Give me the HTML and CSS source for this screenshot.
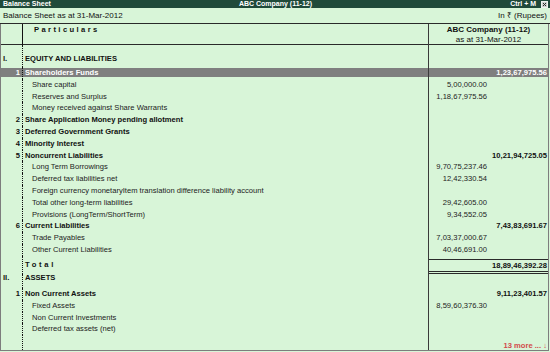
FILE: index.html
```html
<!DOCTYPE html>
<html lang="en">
<head>
    <meta charset="UTF-8">
    <meta name="viewport" content="width=device-width, initial-scale=1.0">
    <title>Balance Sheet</title>
    <link rel="stylesheet" href="styles.css">
</head>
<body>
    <div class="titlebar">
        <span class="tb-left">Balance Sheet</span>
        <span class="tb-center">ABC Company (11-12)</span>
        <span class="tb-right">Ctrl + M
            <svg class="close-box" width="7" height="7" viewBox="0 0 7 7">
                <rect x="0.5" y="0.5" width="6" height="6" fill="#cfd3cf" stroke="#eef2ee"/>
                <path d="M2 2l3 3M5 2l-3 3" stroke="#2a2a2a" stroke-width="1"/>
            </svg>
        </span>
    </div>
    <div class="subhead">
        <span>Balance Sheet as at 31-Mar-2012</span>
        <span>In ₹ (Rupees)</span>
    </div>

    <div class="sheet">
        <div class="row head">
            <div class="c1"></div>
            <div class="c2"><span class="particulars">Particulars</span></div>
            <div class="c34">
                <b>ABC Company (11-12)</b>
                <span>as at 31-Mar-2012</span>
            </div>
        </div>

        <div class="row section first">
            <div class="c1 roman">I.</div>
            <div class="c2 label">EQUITY AND LIABILITIES</div>
            <div class="c3"></div><div class="c4"></div>
        </div>
        <div class="row group selected">
            <div class="c1 num">1</div><div class="c2 label">Shareholders Funds</div>
            <div class="c3"></div><div class="c4">1,23,67,975.56</div>
        </div>
        <div class="row item">
            <div class="c1"></div><div class="c2">Share capital</div>
            <div class="c3">5,00,000.00</div><div class="c4"></div>
        </div>
        <div class="row item">
            <div class="c1"></div><div class="c2">Reserves and Surplus</div>
            <div class="c3">1,18,67,975.56</div><div class="c4"></div>
        </div>
        <div class="row item">
            <div class="c1"></div><div class="c2">Money received against Share Warrants</div>
            <div class="c3"></div><div class="c4"></div>
        </div>
        <div class="row group">
            <div class="c1 num">2</div><div class="c2 label">Share Application Money pending allotment</div>
            <div class="c3"></div><div class="c4"></div>
        </div>
        <div class="row group">
            <div class="c1 num">3</div><div class="c2 label">Deferred Government Grants</div>
            <div class="c3"></div><div class="c4"></div>
        </div>
        <div class="row group">
            <div class="c1 num">4</div><div class="c2 label">Minority Interest</div>
            <div class="c3"></div><div class="c4"></div>
        </div>
        <div class="row group">
            <div class="c1 num">5</div><div class="c2 label">Noncurrent Liabilities</div>
            <div class="c3"></div><div class="c4">10,21,94,725.05</div>
        </div>
        <div class="row item">
            <div class="c1"></div><div class="c2">Long Term Borrowings</div>
            <div class="c3">9,70,75,237.46</div><div class="c4"></div>
        </div>
        <div class="row item">
            <div class="c1"></div><div class="c2">Deferred tax liabilities net</div>
            <div class="c3">12,42,330.54</div><div class="c4"></div>
        </div>
        <div class="row item">
            <div class="c1"></div><div class="c2">Foreign currency monetaryItem translation difference liability account</div>
            <div class="c3"></div><div class="c4"></div>
        </div>
        <div class="row item">
            <div class="c1"></div><div class="c2">Total other long-term liabilities</div>
            <div class="c3">29,42,605.00</div><div class="c4"></div>
        </div>
        <div class="row item">
            <div class="c1"></div><div class="c2">Provisions (LongTerm/ShortTerm)</div>
            <div class="c3">9,34,552.05</div><div class="c4"></div>
        </div>
        <div class="row group">
            <div class="c1 num">6</div><div class="c2 label">Current Liabilities</div>
            <div class="c3"></div><div class="c4">7,43,83,691.67</div>
        </div>
        <div class="row item">
            <div class="c1"></div><div class="c2">Trade Payables</div>
            <div class="c3">7,03,37,000.67</div><div class="c4"></div>
        </div>
        <div class="row item">
            <div class="c1"></div><div class="c2">Other Current Liabilities</div>
            <div class="c3">40,46,691.00</div><div class="c4"></div>
        </div>

        <div class="row total">
            <div class="c1"></div>
            <div class="c2 label"><span class="spaced">Total</span></div>
            <div class="c34"><div class="total-box">18,89,46,392.28</div></div>
        </div>

        <div class="row section second">
            <div class="c1 roman">II.</div>
            <div class="c2 label">ASSETS</div>
            <div class="c3"></div><div class="c4"></div>
        </div>
        <div class="row group">
            <div class="c1 num">1</div><div class="c2 label">Non Current Assets</div>
            <div class="c3"></div><div class="c4">9,11,23,401.57</div>
        </div>
        <div class="row item">
            <div class="c1"></div><div class="c2">Fixed Assets</div>
            <div class="c3">8,59,60,376.30</div><div class="c4"></div>
        </div>
        <div class="row item">
            <div class="c1"></div><div class="c2">Non Current Investments</div>
            <div class="c3"></div><div class="c4"></div>
        </div>
        <div class="row item">
            <div class="c1"></div><div class="c2">Deferred tax assets (net)</div>
            <div class="c3"></div><div class="c4"></div>
        </div>

        <div class="row filler">
            <div class="c1"></div><div class="c2"></div><div class="c3"></div>
            <div class="c4"><span class="more">13 more ... ↓</span></div>
        </div>
    </div>
</body>
</html>
```

FILE: styles.css
```css
:root {
    --bg-color: #d8f5d8;
    --title-color: #204a3a;
    --line-color: #2a2a2a;
    --frame-color: #7d7d7d;
    --select-color: #7f7f7f;
    --more-color: #d24b4b;
}
body {
    margin: 0;
    width: 550px;
    height: 352px;
    overflow: hidden;
    display: flex;
    flex-direction: column;
    background-color: var(--bg-color);
    font-family: 'Liberation Sans', Arial, sans-serif;
    font-size: 7.6px;
    color: #222;
}
.titlebar {
    height: 8px;
    line-height: 8px;
    display: grid;
    grid-template-columns: 1fr auto 1fr;
    padding: 0 2px 0 3px;
    background-color: var(--title-color);
    color: #ffffff;
    font-size: 7px;
    font-weight: bold;
}
.tb-right {
    justify-self: end;
    display: flex;
    align-items: center;
    gap: 5px;
}
.close-box {
    display: block;
}
.subhead {
    height: 15px;
    line-height: 15px;
    display: flex;
    justify-content: space-between;
    padding: 0 3px;
    border-bottom: 1px solid var(--line-color);
    font-size: 8px;
    color: #111;
}
.sheet {
    flex: 1;
    display: flex;
    flex-direction: column;
    margin: 0 1px 1px 0;
    border: 1px solid var(--frame-color);
    border-top: none;
}
.row {
    display: grid;
    grid-template-columns: 21px 406px 60px 1fr;
    height: 11.8px;
    line-height: 11.8px;
    flex-shrink: 0;
}
.row > div {
    box-sizing: border-box;
    white-space: nowrap;
}
.c2 {
    border-left: 1px dotted #111;
    padding-left: 9px;
}
.c3, .c34 {
    border-left: 1px solid #3a3a3a;
}
.c3 {
    text-align: right;
    padding-right: 1px;
}
.c4 {
    text-align: right;
    padding-right: 1px;
    font-weight: bold;
    color: #111;
}
.c34 {
    grid-column: 3 / 5;
}
.label {
    padding-left: 2px;
    font-weight: bold;
    color: #111;
}
.roman {
    padding-left: 2px;
    font-weight: bold;
    color: #111;
}
.num {
    text-align: right;
    padding-right: 2px;
    font-weight: bold;
    color: #111;
}

/* column header */
.head {
    height: 20px;
    border-bottom: 1px solid var(--line-color);
}
.head .c2 {
    border-left-style: solid;
    padding-left: 11px;
    line-height: 9px;
    padding-top: 1px;
}
.particulars {
    font-weight: bold;
    letter-spacing: 2.4px;
    color: #111;
}
.head .c34 {
    display: flex;
    flex-direction: column;
    align-items: center;
    padding-top: 1px;
    line-height: 10px;
    font-size: 8px;
    color: #111;
}

.section.first {
    height: 22.1px;
}
.section.first > div {
    padding-top: 8.1px;
}
.section.second {
    height: 14.1px;
    line-height: 8px;
}

.selected {
    background: linear-gradient(to bottom, transparent 1.5px, var(--select-color) 1.5px, var(--select-color) 10.5px, transparent 10.5px);
}
.selected .label, .selected .num, .selected .c4 {
    color: #ffffff;
}

.total {
    height: 18px;
}
.total .c2 {
    padding-top: 3px;
    line-height: 12px;
}
.spaced {
    letter-spacing: 2.7px;
}
.total-box {
    margin-top: 3px;
    height: 15px;
    line-height: 11px;
    box-sizing: border-box;
    border-top: 1px solid var(--line-color);
    border-bottom: 3px double var(--line-color);
    text-align: right;
    padding-right: 1px;
    font-weight: bold;
    color: #111;
}

.filler {
    flex: 1;
    height: auto;
}
.filler .c4 {
    display: flex;
    align-items: flex-end;
    justify-content: flex-end;
    line-height: 8px;
}
.more {
    color: var(--more-color);
    font-weight: bold;
}
```
